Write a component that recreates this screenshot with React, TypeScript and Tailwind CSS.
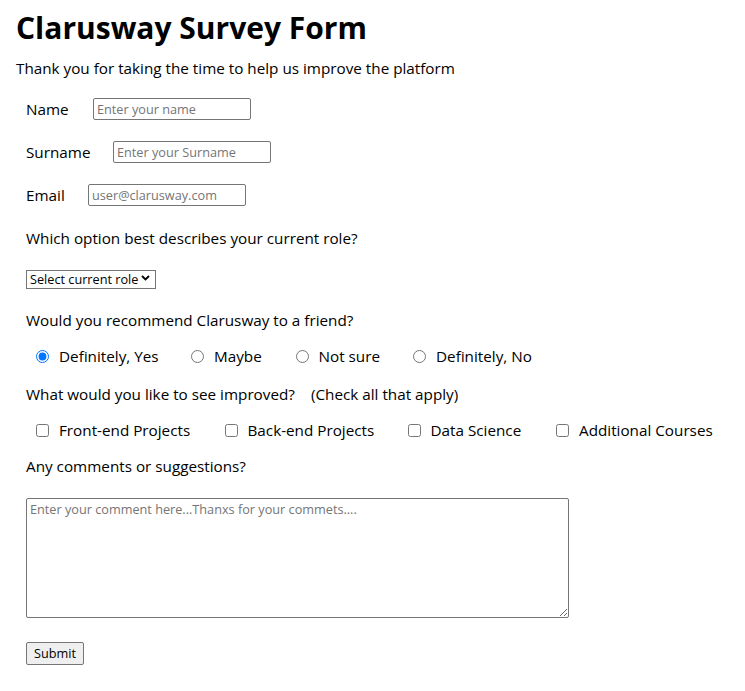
export default function App() {
  const radios = [
    { label: "Definitely, Yes", w: "w-[155px]", checked: true },
    { label: "Maybe", w: "w-[104.5px]", checked: false },
    { label: "Not sure", w: "w-[117.5px]", checked: false },
    { label: "Definitely, No", w: "", checked: false },
  ];
  const checks = [
    { label: "Front-end Projects", w: "w-[188.5px]" },
    { label: "Back-end Projects", w: "w-[183px]" },
    { label: "Data Science", w: "w-[148.5px]" },
    { label: "Additional Courses", w: "" },
  ];
  const inputCls =
    "h-[22px] w-[158px] border border-[#767676] rounded-[2px] bg-white px-[3px] text-[12.7px] leading-[18px] placeholder:text-[#757575] outline-none";
  return (
    <div className="font-['Open_Sans',sans-serif] text-black pl-4 bg-white min-h-[691px]">
      <h1 className="pt-[9px] text-[30px] font-bold leading-[38px] whitespace-nowrap">Clarusway Survey Form</h1>
      <p className="mt-[11px] text-[15.25px] leading-[20px]">Thank you for taking the time to help us improve the platform</p>
      <form className="pl-[10px] text-[15.25px] leading-[20px]" onSubmit={(e) => e.preventDefault()}>
        <div className="mt-[20px] flex h-[22px] items-center">
          <label className="w-[67px]">Name</label>
          <input type="text" placeholder="Enter your name" className={inputCls} />
        </div>
        <div className="mt-[21px] flex h-[22px] items-center">
          <label className="w-[87px]">Surname</label>
          <input type="text" placeholder="Enter your Surname" className={inputCls} />
        </div>
        <div className="mt-[21px] flex h-[22px] items-center">
          <label className="w-[62px]">Email</label>
          <input type="email" placeholder="user@clarusway.com" className={inputCls} />
        </div>
        <p className="mt-[22px]">Which option best describes your current role?</p>
        <div className="relative mt-[20px] h-[19px] w-[130px]">
          <select className="h-full w-full appearance-none border border-[#767676] bg-white pl-[3px] text-[12.7px] leading-[17px] outline-none">
            <option>Select current role</option>
            <option>Student</option>
            <option>Full Time Job</option>
            <option>Prefer not to say</option>
            <option>Other</option>
          </select>
          <svg className="pointer-events-none absolute right-[6px] top-[7px]" width="9" height="6" viewBox="0 0 9 6">
            <path d="M1 1 L4.5 4.5 L8 1" fill="none" stroke="#000" strokeWidth="1.8" />
          </svg>
        </div>
        <p className="mt-[23px]">Would you recommend Clarusway to a friend?</p>
        <div className="mt-[16px] flex h-[20px] items-center pl-[10px]">
          {radios.map((r) => (
            <label key={r.label} className={`flex shrink-0 items-center ${r.w}`}>
              <input type="radio" name="recommend" defaultChecked={r.checked} className="m-0 h-[13px] w-[13px]" />
              <span className="ml-[10px] whitespace-nowrap">{r.label}</span>
            </label>
          ))}
        </div>
        <p className="mt-[18px] flex whitespace-nowrap">
          <span className="w-[285px]">What would you like to see improved?</span>
          <span>(Check all that apply)</span>
        </p>
        <div className="mt-[16px] flex h-[20px] items-center pl-[10px]">
          {checks.map((c) => (
            <label key={c.label} className={`flex shrink-0 items-center ${c.w}`}>
              <input type="checkbox" className="m-0 h-[13px] w-[13px]" />
              <span className="ml-[10px] whitespace-nowrap">{c.label}</span>
            </label>
          ))}
        </div>
        <p className="mt-[16px]">Any comments or suggestions?</p>
        <textarea
          placeholder="Enter your comment here...Thanxs for your commets...."
          className="mt-[22px] block h-[120px] w-[543px] resize rounded-[2px] border border-[#767676] bg-white px-[3px] py-[2px] text-[12.7px] leading-[17px] placeholder:text-[#757575] outline-none"
        />
        <button
          type="submit"
          className="mt-[24px] block h-[23px] w-[58px] rounded-[2px] border border-[#767676] bg-[#efefef] text-[12.7px] leading-[17px] text-black"
        >
          Submit
        </button>
      </form>
    </div>
  );
}
